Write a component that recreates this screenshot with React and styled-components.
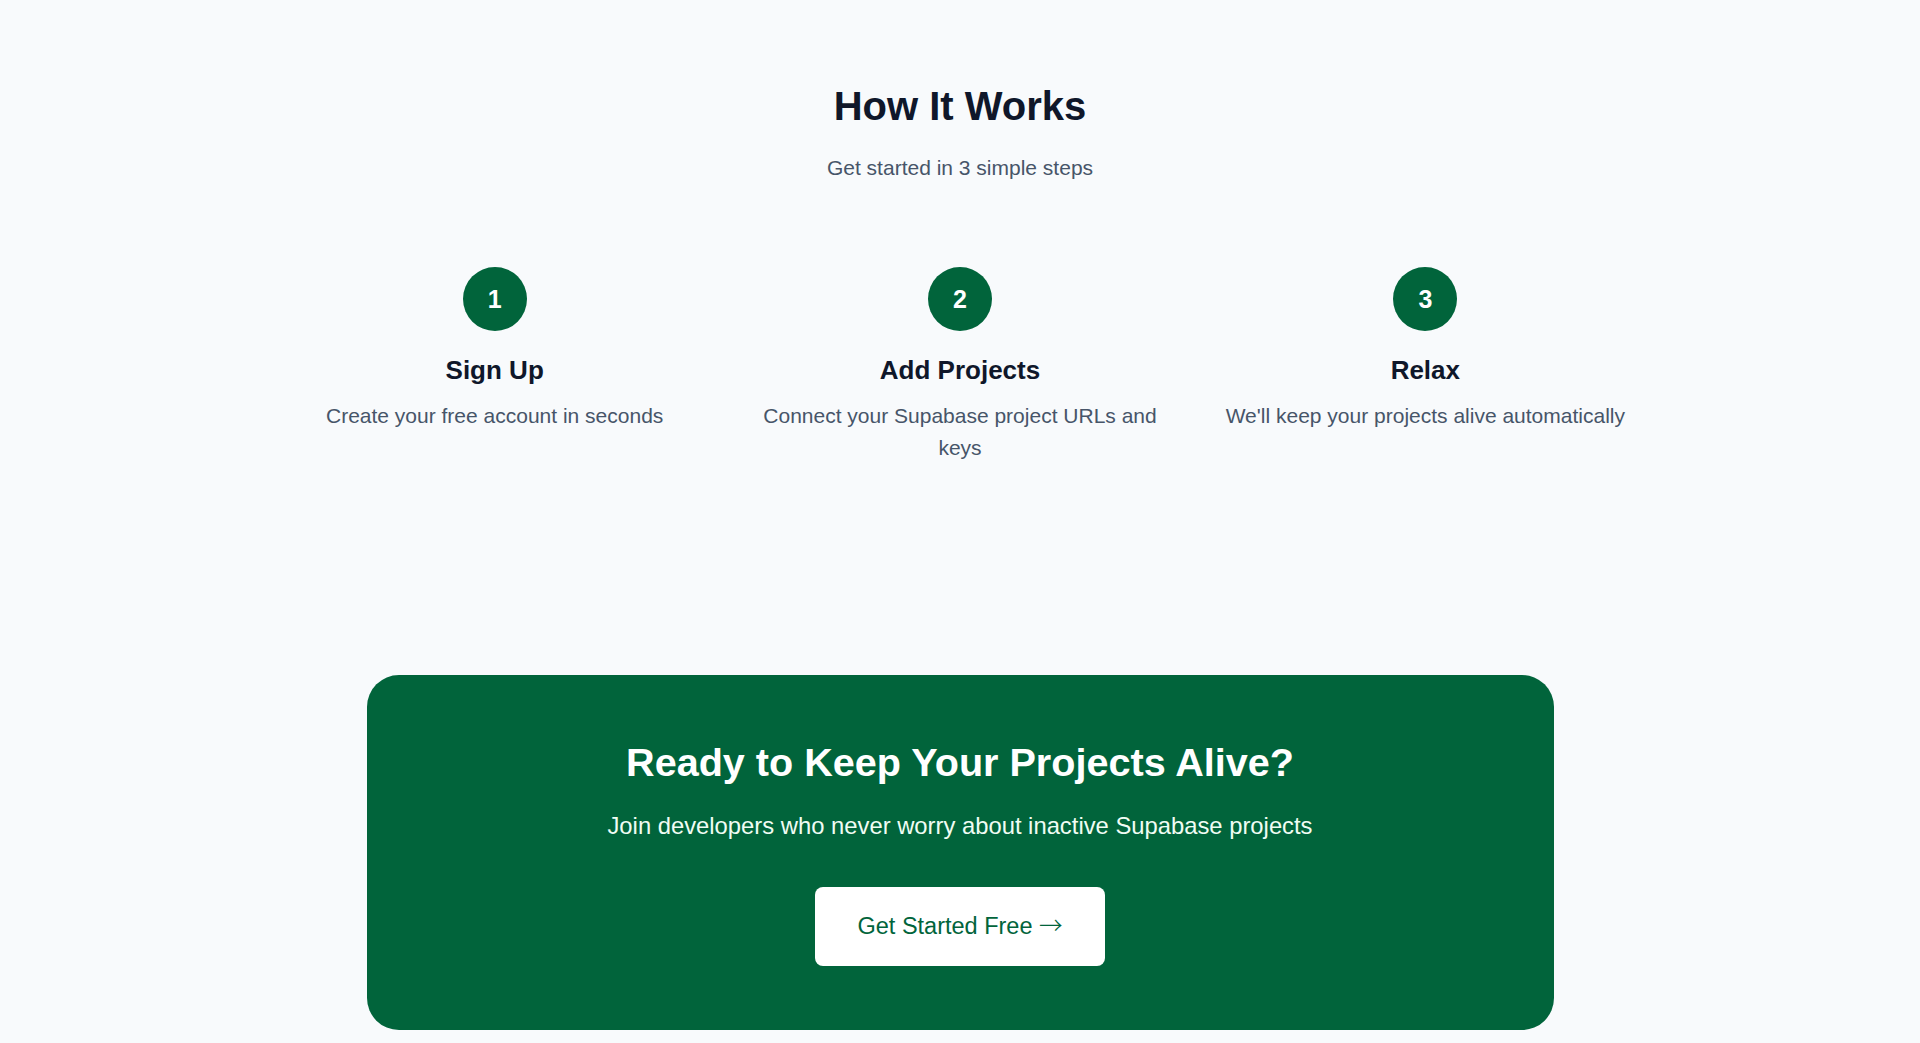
import React from 'react';
import styled, { createGlobalStyle } from 'styled-components';

const GlobalStyle = createGlobalStyle`
  html, body {
    margin: 0;
    padding: 0;
    background: #f8fafc;
  }
  body {
    font-family: "Liberation Sans", Arial, sans-serif;
    color: #0f172a;
  }
`;

const brandGreen = '#01643b';

const Page = styled.main`
  min-height: 100vh;
  background: #f8fafc;
  padding-top: 82px;
  box-sizing: border-box;
`;

const HowSection = styled.section`
  display: flex;
  flex-direction: column;
  align-items: center;
  text-align: center;
`;

const SectionTitle = styled.h2`
  margin: 0;
  font-size: 40px;
  line-height: 48px;
  font-weight: 700;
  color: #0f172a;
`;

const SectionSubtitle = styled.p`
  margin: 22px 0 0;
  font-size: 21px;
  line-height: 31.5px;
  color: #475569;
`;

const StepsGrid = styled.div`
  display: grid;
  grid-template-columns: repeat(3, 1fr);
  gap: 48px;
  width: 1348px;
  margin-top: 83.5px;
`;

const Step = styled.div`
  display: flex;
  flex-direction: column;
  align-items: center;
`;

const StepBadge = styled.div`
  width: 64px;
  height: 64px;
  border-radius: 50%;
  background: ${brandGreen};
  color: #ffffff;
  display: flex;
  align-items: center;
  justify-content: center;
  font-size: 25px;
  font-weight: 700;
`;

const StepTitle = styled.h3`
  margin: 20px 0 10px;
  font-size: 26px;
  line-height: 39px;
  font-weight: 700;
  color: #0f172a;
`;

const StepText = styled.p`
  margin: 0;
  font-size: 21px;
  line-height: 31.5px;
  color: #475569;
`;

const CtaCard = styled.section`
  width: 1187px;
  margin: 212px auto 0;
  box-sizing: border-box;
  padding: 63px 40px 64px;
  border-radius: 32px;
  background: ${brandGreen};
  display: flex;
  flex-direction: column;
  align-items: center;
  text-align: center;
`;

const CtaTitle = styled.h2`
  margin: 0;
  font-size: 39.6px;
  line-height: 48px;
  font-weight: 700;
  color: #ffffff;
`;

const CtaText = styled.p`
  margin: 22px 0 0;
  font-size: 23.8px;
  line-height: 36px;
  color: #f0fdf4;
`;

const CtaButton = styled.button`
  margin-top: 43px;
  padding: 22px 42px;
  border: none;
  border-radius: 8px;
  background: #ffffff;
  color: ${brandGreen};
  font-family: inherit;
  font-size: 23.5px;
  line-height: 35px;
  cursor: pointer;
`;

const Arrow = styled.span`
  font-family: "Noto Sans CJK JP", "DejaVu Sans", sans-serif;
  font-size: 23.5px;
  font-weight: 300;
  line-height: 0;
`;

const steps = [
  { n: 1, title: 'Sign Up', text: 'Create your free account in seconds' },
  { n: 2, title: 'Add Projects', text: 'Connect your Supabase project URLs and keys' },
  { n: 3, title: 'Relax', text: "We'll keep your projects alive automatically" },
];

export default function App() {
  return (
    <>
      <GlobalStyle />
      <Page>
        <HowSection>
          <SectionTitle>How It Works</SectionTitle>
          <SectionSubtitle>Get started in 3 simple steps</SectionSubtitle>
          <StepsGrid>
            {steps.map(s => (
              <Step key={s.n}>
                <StepBadge>{s.n}</StepBadge>
                <StepTitle>{s.title}</StepTitle>
                <StepText>{s.text}</StepText>
              </Step>
            ))}
          </StepsGrid>
        </HowSection>

        <CtaCard>
          <CtaTitle>Ready to Keep Your Projects Alive?</CtaTitle>
          <CtaText>Join developers who never worry about inactive Supabase projects</CtaText>
          <CtaButton>Get Started Free <Arrow>→</Arrow></CtaButton>
        </CtaCard>
      </Page>
    </>
  );
}
